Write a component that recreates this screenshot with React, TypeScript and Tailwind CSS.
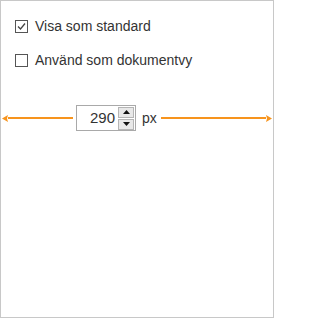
import React from "react";

const Arrow: React.FC<{ dir: "left" | "right"; className?: string }> = ({ dir, className }) => (
  <div className={`flex items-center ${dir === "right" ? "flex-row-reverse" : ""} ${className ?? ""}`}>
    <svg width="6" height="7" viewBox="0 0 6 7" className="shrink-0">
      {dir === "left" ? (
        <polygon points="0,3.5 6,0 5,3.5 6,7" fill="#f7941d" />
      ) : (
        <polygon points="6,3.5 0,0 1,3.5 0,7" fill="#f7941d" />
      )}
    </svg>
    <div className="h-[2px] flex-1 bg-[#f7941d]"></div>
  </div>
);

const App: React.FC = () => {
  return (
    <div
      className="w-[274px] h-[318px] border border-[#c8c8c8] bg-white text-[14px] text-[#333]"
      style={{ fontFamily: '"Liberation Sans", Arial, sans-serif' }}
    >
      <div className="flex flex-col gap-[21px] pl-[14px] pt-[19px]">
        <label className="flex items-center h-[13px]">
          <span className="w-[13px] h-[13px] border border-[#555] bg-white flex items-center justify-center">
            <svg width="11" height="11" viewBox="0 0 11 11">
              <polyline points="2,5.5 4.5,8 9,2.5" fill="none" stroke="#444" strokeWidth="1.3" />
            </svg>
          </span>
          <span className="ml-[7px]">Visa som standard</span>
        </label>
        <label className="flex items-center h-[13px]">
          <span className="w-[13px] h-[13px] border border-[#555] bg-white"></span>
          <span className="ml-[7px]">Använd som dokumentvy</span>
        </label>
      </div>

      <div className="flex items-center mt-[38px] px-[1px]">
        <Arrow dir="left" className="w-[71px]" />
        <div className="ml-[3px] flex items-center w-[60px] h-[26px] border border-[#a9a9a9] bg-white">
          <span className="flex-1 text-right pr-[3px] text-[15px]">290</span>
          <div className="flex flex-col w-[16px] h-[23px] mr-[1px] gap-[1px]">
            <div className="flex-1 flex items-center justify-center bg-[#e8e8e8] border border-[#b5b5b5]">
              <svg width="7" height="4" viewBox="0 0 7 4">
                <polygon points="3.5,0 7,4 0,4" fill="#111" />
              </svg>
            </div>
            <div className="flex-1 flex items-center justify-center bg-[#e8e8e8] border border-[#b5b5b5]">
              <svg width="7" height="4" viewBox="0 0 7 4">
                <polygon points="0,0 7,0 3.5,4" fill="#111" />
              </svg>
            </div>
          </div>
        </div>
        <span className="ml-[6px] mr-[4px] text-[14px]">px</span>
        <Arrow dir="right" className="flex-1" />
      </div>
    </div>
  );
};

export default App;
